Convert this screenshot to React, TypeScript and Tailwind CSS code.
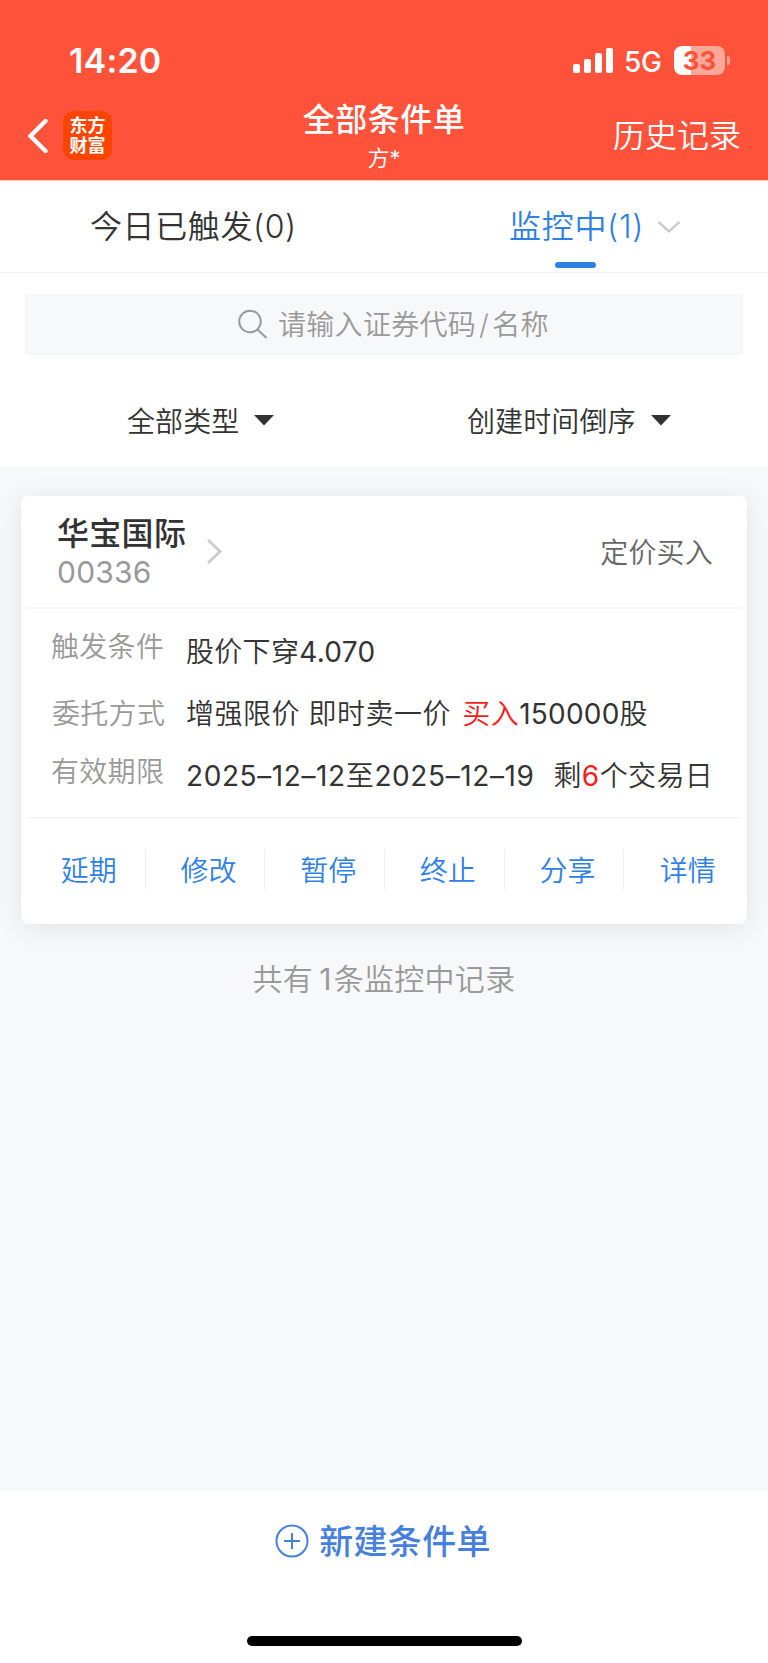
interface InfoRow {
    label: string;
    value: React.ReactNode;
    labelClass: string;
    valueClass: string;
}

const rows: InfoRow[] = [
    {
        label: "触发条件",
        value: (
            <>
                股价下穿<span className="font-normal">4.070</span>
            </>
        ),
        labelClass: "pl-[25px] pt-[20px]",
        valueClass: "pt-[25px] tracking-[0.3px]",
    },
    {
        label: "委托方式",
        value: (
            <>
                增强限价 即时卖一价 <span className="ml-[3px] text-[#ff1a1a]">买入</span>
                <span className="font-normal tracking-[0.2px]">150000</span>股
            </>
        ),
        labelClass: "pl-[26px] pt-[26px]",
        valueClass: "pt-[26px] tracking-[0.5px]",
    },
    {
        label: "有效期限",
        value: (
            <>
                <span className="font-normal tracking-[0.6px]">
                    2025–12–12<span className="font-[350]">至</span>2025–12–19
                </span>
                <span className="ml-[19px] tracking-[0.4px]">
                    剩<span className="font-normal text-[#ff1a1a]">6</span>个交易日
                </span>
            </>
        ),
        labelClass: "pl-[25px] pt-[22px]",
        valueClass: "pt-[26px]",
    },
];

const actions = ["延期", "修改", "暂停", "终止", "分享", "详情"];

function StatusBar() {
    return (
        <div className="flex h-[96px] items-start pt-[42px] text-white">
            <div className="w-[573px] pl-[69px] text-[34px] font-semibold leading-[38px] tracking-[0.2px]">14:20</div>
            <svg className="mt-[6px] shrink-0" width="40" height="25" fill="currentColor">
                <rect x="0" y="16" width="7" height="9" rx="2" />
                <rect x="11" y="11" width="7" height="14" rx="2" />
                <rect x="22" y="5" width="7" height="20" rx="2" />
                <rect x="33" y="0" width="7" height="25" rx="2" />
            </svg>
            <span className="ml-[11px] w-[40px] text-[28px] font-medium leading-[40px] tracking-[-0.3px]">5G</span>
            <div className="ml-[10px] mt-1 flex items-center">
                <div className="h-[29px] w-[51px] rounded-[8px] bg-[linear-gradient(90deg,#fff_17px,#ffa799_17px)] text-center text-[26px] font-bold leading-[29px] text-[#ff523b]">
                    33
                </div>
                <div className="ml-[2px] h-[9px] w-[3px] rounded-r-full bg-[#ffa799]" />
            </div>
        </div>
    );
}

function NavBar() {
    return (
        <div className="flex h-[84px] text-white">
            <div className="flex w-[260px] pl-[27px] pt-[15px]">
                <svg className="mt-[7px]" width="22" height="36" fill="none" stroke="currentColor" strokeWidth="4.4" strokeLinecap="round">
                    <path d="M18.500 3 3.5 18 18.500 33" />
                </svg>
                <div className="ml-[14px] h-[49px] w-[49px] rounded-[11px] bg-[#ff4400] pt-[5px] text-center text-[18px] font-bold leading-[20px]">
                    东方
                    <br />
                    财富
                </div>
            </div>
            <div className="w-[248px] pt-[4px] text-center">
                <div className="text-[32px] font-medium leading-[40px] tracking-[0.5px]">全部条件单</div>
                <div className="text-[22px] leading-[36px]">方*</div>
            </div>
            <div className="w-[260px] pr-[27px] pt-[20px] text-right text-[32px] font-[350] leading-[40px]">历史记录</div>
        </div>
    );
}

function Tabs() {
    return (
        <div className="flex h-[92px] border-b border-[#eff1f3] text-[32px] font-[350] leading-[40px]">
            <div className="w-1/2 pl-[90px] pt-[26px] tracking-[0.6px] text-[#333]">今日已触发(0)</div>
            <div className="flex w-1/2 flex-col pl-[125px] pt-[26px] text-[#2f80e5]">
                <div className="flex items-center tracking-[0.7px]">
                    监控中(1)
                    <svg className="ml-[13px]" width="24" height="14" fill="none" stroke="#ccc" strokeWidth="2.4">
                        <path d="m1.5 2 10.5 9.5L22.500 2" />
                    </svg>
                </div>
                <div className="ml-[46px] mt-[15px] h-[6px] w-[41px] rounded-full bg-[#2f80e5]" />
            </div>
        </div>
    );
}

function Filter({ label, className }: { label: string; className: string }) {
    return (
        <div className={`flex w-1/2 items-center text-[28px] font-[350] leading-[36px] tracking-[0.1px] text-[#333] ${className}`}>
            {label}
            <svg className="mb-[3px] ml-[15px]" width="20" height="11" fill="#333">
                <path d="M0 0h20L10 10.500z" />
            </svg>
        </div>
    );
}

function OrderCard() {
    return (
        <div className="mx-[21px] mt-[29px] h-[428px] rounded-[8px] bg-white shadow-[0_4px_28px_rgba(0,0,0,0.09)]">
            <div className="mx-[5px] flex h-[113px] border-b-2 border-[#f5f6f7]">
                <div className="w-[149px] pl-[31px] pt-[18px]">
                    <div className="whitespace-nowrap text-[32px] font-medium leading-[40px] tracking-[0.3px] text-[#333]">华宝国际</div>
                    <div className="text-[30px] font-normal leading-[36px] tracking-[0.2px] text-[#999]">00336</div>
                </div>
                <svg className="ml-[31px] mt-[42px]" width="17" height="27" fill="none" stroke="#ccc" strokeWidth="2.800">
                    <path d="m2 2 12 11.500L2 25" />
                </svg>
                <div className="ml-auto pr-[29px] pt-[39px] text-[28px] font-[350] leading-[36px] tracking-[0.2px] text-[#666]">定价买入</div>
            </div>
            <div className="mx-[5px] h-[210px] border-b-2 border-[#f5f6f7] text-[28px] font-[350] leading-[36px] text-[#333]">
                {rows.map((row) => (
                    <div key={row.label} className="flex whitespace-nowrap">
                        <div className={`w-[160px] shrink-0 tracking-[0.3px] text-[#999] ${row.labelClass}`}>{row.label}</div>
                        <div className={row.valueClass}>{row.value}</div>
                    </div>
                ))}
            </div>
            <div className="ml-[5px] mr-[3px] grid grid-cols-6 pt-[30px]">
                {actions.map((action) => (
                    <div
                        key={action}
                        className="h-[41px] border-r border-[#eceef0] pl-[7px] pt-[2px] text-center text-[28px] font-[350] leading-[41px] text-[#2f80e5] last:border-r-0"
                    >
                        {action}
                    </div>
                ))}
            </div>
        </div>
    );
}

export default function App() {
    return (
        <div className="flex h-[1663px] w-[768px] flex-col overflow-hidden bg-[#f7f8fa] font-['Inter','Noto_Sans_CJK_SC',sans-serif]">
            <header className="h-[181px] shrink-0 border-b border-[#ffc4bb] bg-[#ff523b]">
                <StatusBar />
                <NavBar />
            </header>
            <div className="h-[286px] shrink-0 bg-white">
                <Tabs />
                <div className="mx-[25px] mt-[21px] flex h-[61px] items-center rounded-[4px] border border-[#f1f3f5] bg-[#f7f8fa] pl-[212px] text-[28px] font-[350] leading-[36px] tracking-[0.300px] text-[#999]">
                    <svg className="mb-[2px] mr-[10px]" width="30" height="30" fill="none" stroke="#999" strokeWidth="2">
                        <circle cx="12" cy="12.500" r="10.800" />
                        <path d="m19.500 20.500 9 8.500" />
                    </svg>
                    请输入证券代码<span className="px-[3px]">/</span>名称
                </div>
                <div className="mt-[49px] flex">
                    <Filter label="全部类型" className="pl-[127px]" />
                    <Filter label="创建时间倒序" className="pl-[83px]" />
                </div>
            </div>
            <main className="flex-1">
                <OrderCard />
                <p className="pt-[35px] text-center text-[30px] font-[350] leading-[40px] tracking-[0.300px] text-[#999]">
                    共有<span className="ml-[6px] mr-[2px] font-normal">1</span>条监控中记录
                </p>
            </main>
            <footer className="h-[172px] shrink-0 bg-white">
                <div className="flex items-center justify-center pr-[2px] pt-[30px] text-[34px] font-medium leading-[42px] tracking-[0.300px] text-[#477fdf]">
                    <svg className="mb-[2px] mr-[10px]" width="34" height="34" fill="none" stroke="currentColor" strokeWidth="2">
                        <circle cx="17" cy="17" r="15.500" />
                        <path d="M17 9v16M9 17h16" />
                    </svg>
                    <span>新建条件单</span>
                </div>
                <div className="mx-auto mt-[73px] h-[10px] w-[275px] rounded-full bg-black" />
            </footer>
        </div>
    );
}
